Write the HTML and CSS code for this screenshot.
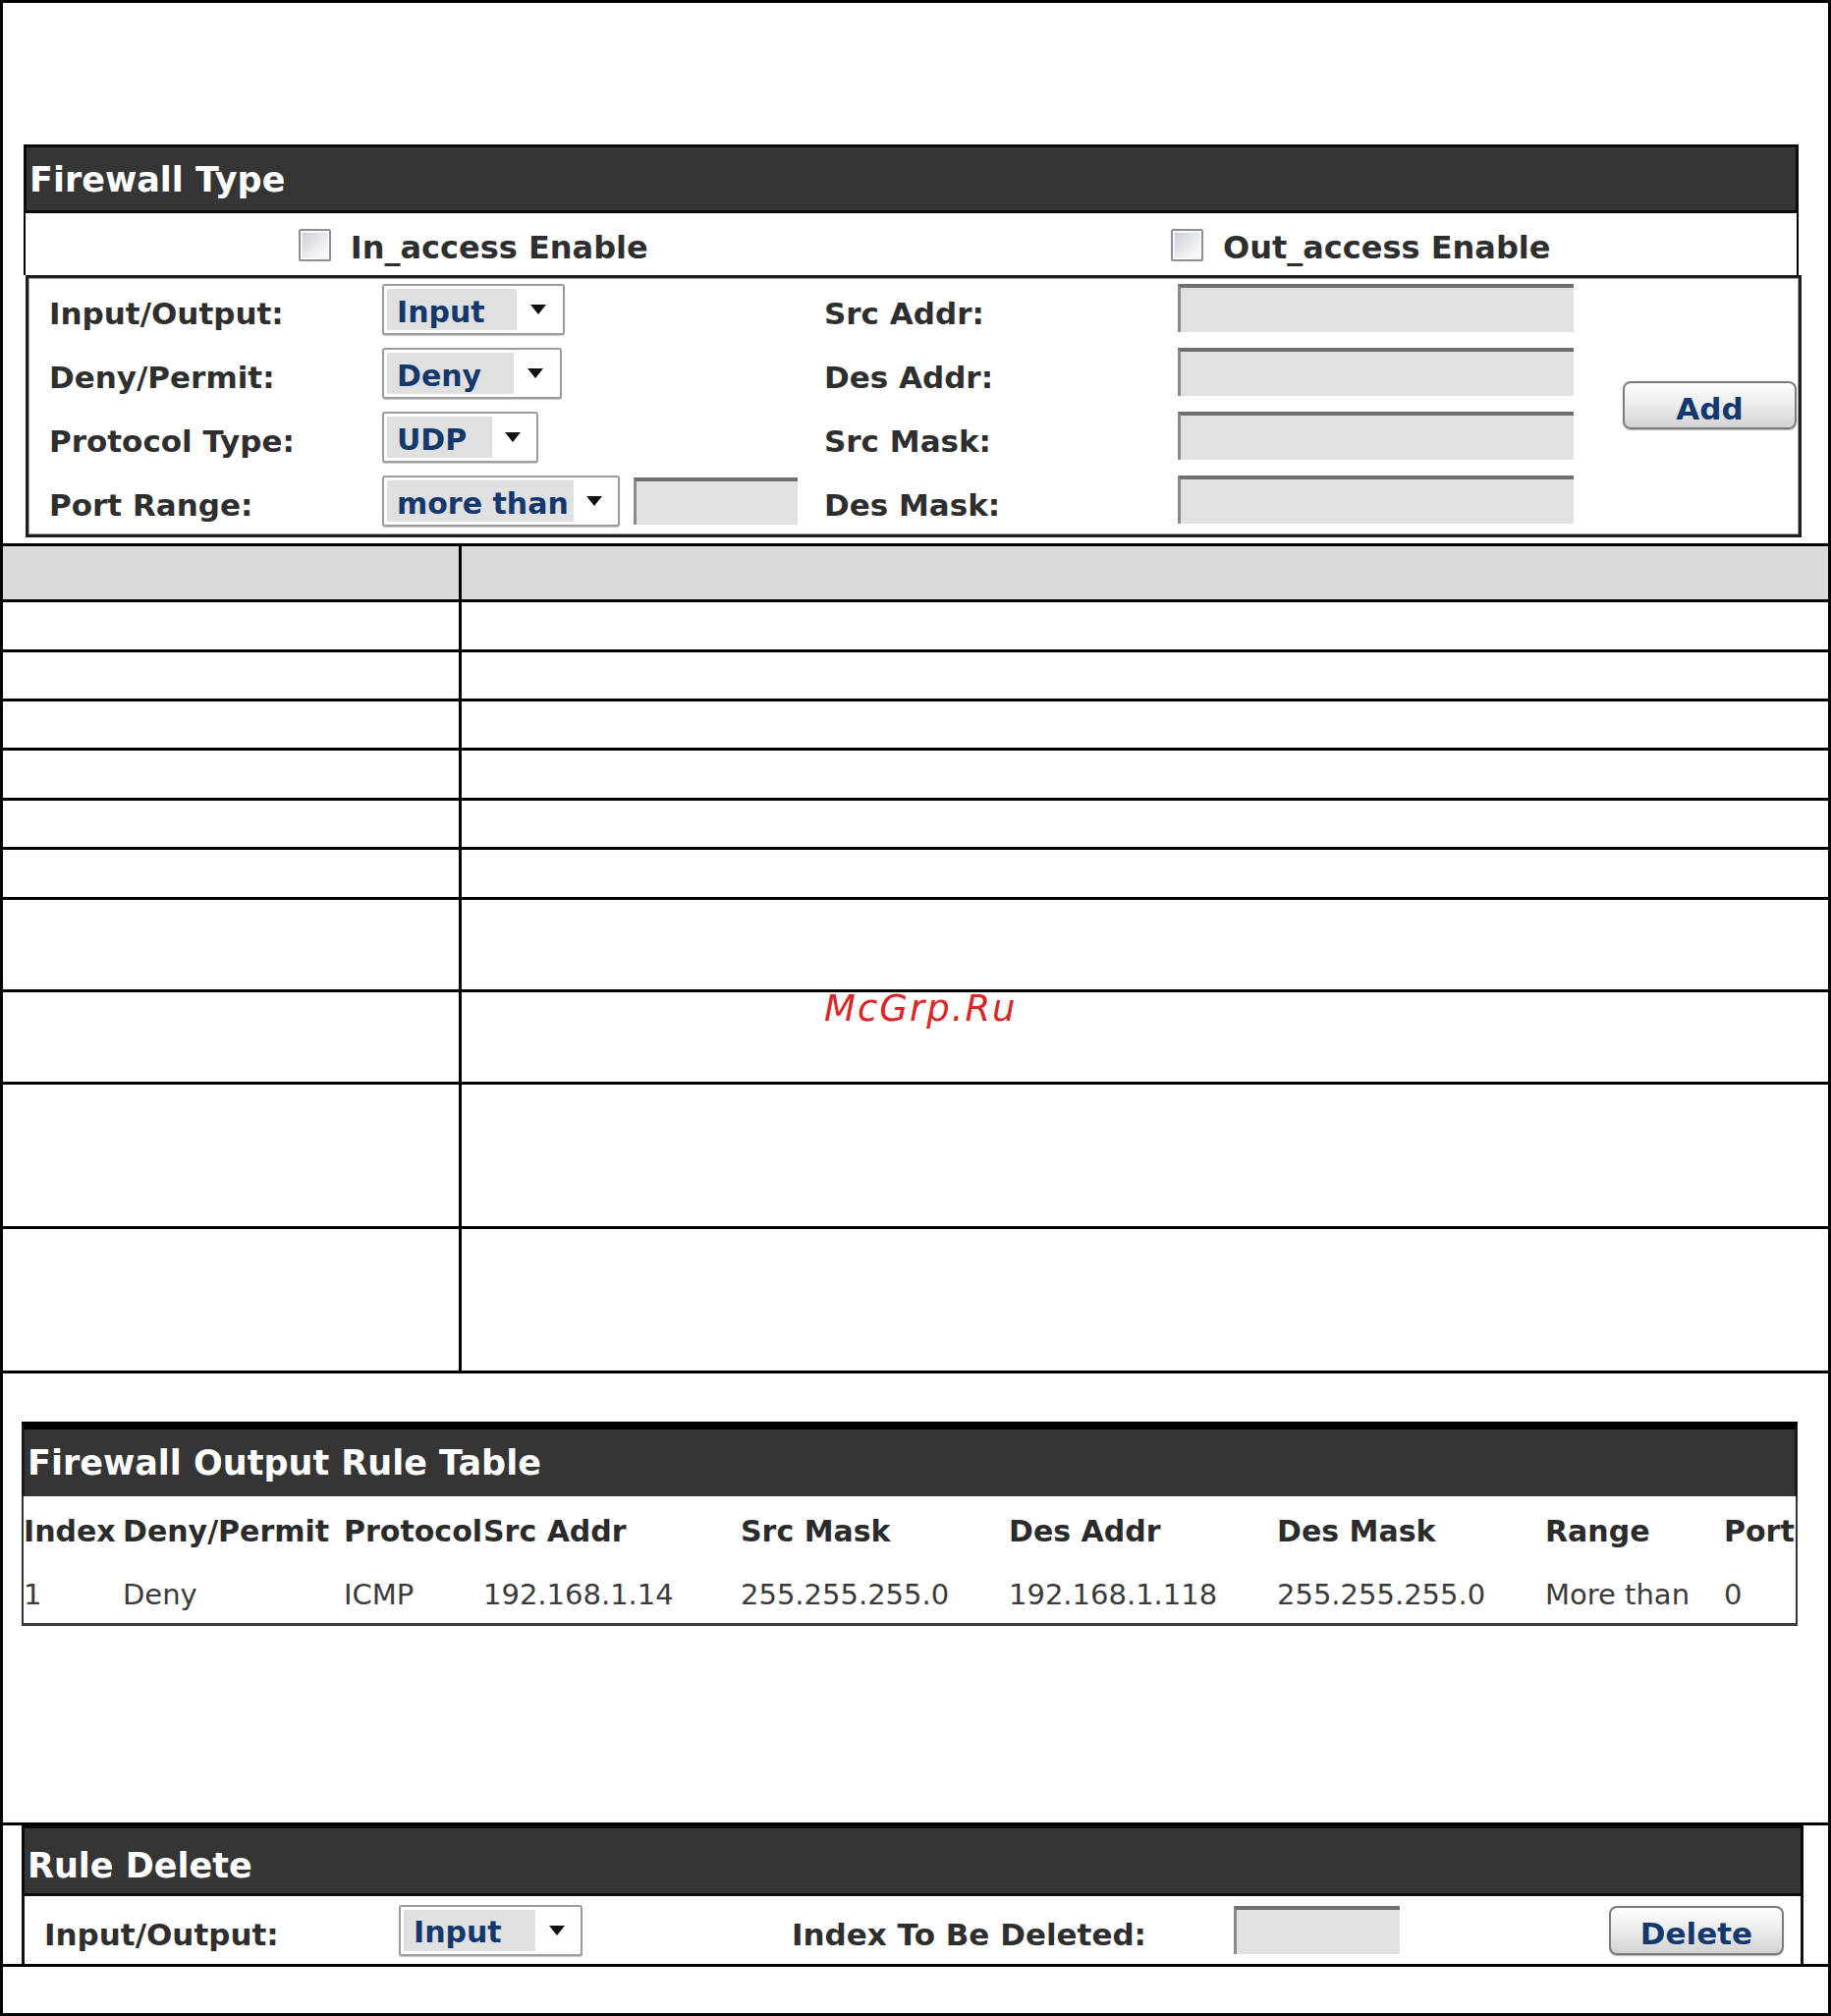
FILE: index.html
```html
<!DOCTYPE html>
<html lang="en">
<head>
<meta charset="utf-8">
<title>Firewall</title>
<link rel="stylesheet" href="styles.css">
</head>
<body>
<div class="page">

  <section class="fw-type">
    <div class="panel-head">Firewall Type</div>
    <div class="access-row">
      <label class="access-cell"><span class="chk"></span><span class="access-text">In_access Enable</span></label>
      <label class="access-cell"><span class="chk"></span><span class="access-text">Out_access Enable</span></label>
    </div>
  </section>

  <div class="rule-form">
    <div class="lbl">Input/Output:</div>
    <div class="select sel-io"><span class="val">Input</span><span class="arr"><svg viewBox="0 0 16 10" width="16" height="10"><path d="M0 0H16L8 10Z"/></svg></span></div>
    <div class="lbl">Src Addr:</div>
    <div class="text-in"></div>
    <button class="btn btn-add">Add</button>

    <div class="lbl">Deny/Permit:</div>
    <div class="select sel-dp"><span class="val">Deny</span><span class="arr"><svg viewBox="0 0 16 10" width="16" height="10"><path d="M0 0H16L8 10Z"/></svg></span></div>
    <div class="lbl">Des Addr:</div>
    <div class="text-in"></div>

    <div class="lbl">Protocol Type:</div>
    <div class="select sel-proto"><span class="val">UDP</span><span class="arr"><svg viewBox="0 0 16 10" width="16" height="10"><path d="M0 0H16L8 10Z"/></svg></span></div>
    <div class="lbl">Src Mask:</div>
    <div class="text-in"></div>

    <div class="lbl">Port Range:</div>
    <div class="range-cell">
      <div class="select sel-range"><span class="val">more than</span><span class="arr"><svg viewBox="0 0 16 10" width="16" height="10"><path d="M0 0H16L8 10Z"/></svg></span></div>
      <div class="text-in small"></div>
    </div>
    <div class="lbl">Des Mask:</div>
    <div class="text-in"></div>
  </div>

  <div class="desc">
    <div class="desc-row row-head"><div class="k"></div><div class="v"></div></div>
    <div class="desc-row row-a"><div class="k"></div><div class="v"></div></div>
    <div class="desc-row row-b"><div class="k"></div><div class="v"></div></div>
    <div class="desc-row row-b"><div class="k"></div><div class="v"></div></div>
    <div class="desc-row row-a"><div class="k"></div><div class="v"></div></div>
    <div class="desc-row row-b"><div class="k"></div><div class="v"></div></div>
    <div class="desc-row row-a"><div class="k"></div><div class="v"></div></div>
    <div class="desc-row row-tall"><div class="k"></div><div class="v"></div></div>
    <div class="desc-row row-tall"><div class="k"></div><div class="v"></div></div>
    <div class="desc-row row-xtall"><div class="k"></div><div class="v"></div></div>
    <div class="desc-row row-xtall"><div class="k"></div><div class="v"></div></div>
  </div>

  <section class="out">
    <div class="panel-head">Firewall Output Rule Table</div>
    <div class="out-body">
      <div class="out-grid">
        <div class="th">Index</div>
        <div class="th">Deny/Permit</div>
        <div class="th">Protocol</div>
        <div class="th">Src Addr</div>
        <div class="th">Src Mask</div>
        <div class="th">Des Addr</div>
        <div class="th">Des Mask</div>
        <div class="th">Range</div>
        <div class="th">Port</div>

        <div class="td">1</div>
        <div class="td">Deny</div>
        <div class="td">ICMP</div>
        <div class="td">192.168.1.14</div>
        <div class="td">255.255.255.0</div>
        <div class="td">192.168.1.118</div>
        <div class="td">255.255.255.0</div>
        <div class="td">More than</div>
        <div class="td">0</div>
      </div>
    </div>
  </section>

  <section class="del-wrap">
    <div class="del-box">
      <div class="panel-head">Rule Delete</div>
      <div class="del-row">
        <div class="lbl">Input/Output:</div>
        <div class="select sel-del"><span class="val">Input</span><span class="arr"><svg viewBox="0 0 16 10" width="16" height="10"><path d="M0 0H16L8 10Z"/></svg></span></div>
        <div class="lbl">Index To Be Deleted:</div>
        <div class="text-in idx"></div>
        <button class="btn btn-del">Delete</button>
      </div>
    </div>
  </section>

  <div class="wm">McGrp.Ru</div>
</div>
</body>
</html>
```

FILE: styles.css
```css
* { box-sizing: border-box; }

html, body {
  margin: 0;
  padding: 0;
  background: #fff;
}

body {
  font-family: "DejaVu Sans", Verdana, sans-serif;
  color: #2e2e2e;
}

.page {
  position: relative;
  width: 1864px;
  height: 2052px;
  border: 3px solid #000;
  overflow: hidden;
}

/* ---------- panel header ---------- */
.panel-head {
  display: flex;
  align-items: center;
  background: #353535;
  color: #fff;
  font-weight: bold;
  font-size: 35px;
  white-space: nowrap;
  padding-left: 3px;
}

/* ---------- Firewall Type ---------- */
.fw-type {
  margin: 144px 0 0 21px;
  width: 1807px;
}

.fw-type .panel-head {
  height: 70px;
  border: 3px solid #0b0b0b;
  padding-top: 2px;
}

.access-row {
  display: flex;
  height: 63px;
  border-left: 2px solid #000;
  border-right: 2px solid #000;
}

.access-cell {
  flex: 1;
  display: flex;
  align-items: center;
  justify-content: center;
  gap: 20px;
  font-weight: bold;
  font-size: 32px;
  white-space: nowrap;
}

.access-cell:first-child { padding-left: 12px; }
.access-cell:last-child { padding-left: 16px; }

.access-text { padding-top: 7px; }

.chk {
  display: block;
  width: 33px;
  height: 33px;
  margin-top: 2px;
  border: 2px solid #8f8f8f;
  border-radius: 2px;
  background: linear-gradient(135deg, #c4c9d3 0%, #e9ebef 55%, #ffffff 100%);
  box-shadow: inset 0 0 0 2px #f7f7f7;
}

/* ---------- rule form ---------- */
.rule-form {
  margin-left: 23px;
  width: 1808px;
  height: 267px;
  border: 3px solid #1e1e1e;
  box-shadow: inset 0 0 0 1px #a0a0a0;
  display: grid;
  grid-template-columns: 339px 450px 360px 403px 1fr;
  grid-auto-rows: 52px;
  row-gap: 13px;
  padding: 6px 2px 0 21px;
  align-items: center;
}

.lbl {
  font-weight: bold;
  font-size: 31px;
  white-space: nowrap;
  padding-top: 8px;
}

.select {
  display: flex;
  height: 52px;
  border: 2px solid #9c9c9c;
  border-radius: 3px;
  background: #fff;
  padding: 3px;
  box-shadow: 0 1px 1px #c8c8c8;
}

.select .val {
  display: flex;
  align-items: center;
  background: #e0e0e0;
  color: #12386e;
  font-weight: bold;
  font-size: 30px;
  padding: 4px 0 0 10px;
  white-space: nowrap;
}

.select .arr {
  flex: 1;
  display: flex;
  align-items: center;
  justify-content: center;
}

.select .arr path { fill: #111; }

.sel-io { width: 186px; }
.sel-io .val { width: 132px; }
.sel-dp { width: 183px; }
.sel-dp .val { width: 129px; }
.sel-proto { width: 159px; }
.sel-proto .val { width: 107px; }
.sel-range { width: 242px; }
.sel-range .val { width: 190px; }
.sel-del { width: 187px; }
.sel-del .val { width: 134px; }

.range-cell {
  display: flex;
  align-items: center;
  gap: 14px;
}

.text-in {
  width: 403px;
  height: 49px;
  align-self: start;
  background: #e1e1e1;
  border-top: 4px solid #6f6f6f;
  border-left: 3px solid #8a8a8a;
}

.text-in.small {
  width: 167px;
  height: 48px;
  align-self: center;
}

.btn {
  border: 2px solid #7b7b7b;
  border-radius: 8px;
  background: linear-gradient(#fdfdfd 0%, #eeeeee 45%, #d2d2d2 100%);
  font-family: "DejaVu Sans", Verdana, sans-serif;
  font-weight: bold;
  font-size: 31px;
  color: #12386e;
  padding: 6px 0 0 0;
  box-shadow: 0 1px 1px #b5b5b5;
}

.btn-add {
  grid-column: 5;
  grid-row: 1 / span 4;
  justify-self: end;
  align-self: center;
  width: 177px;
  height: 49px;
}

/* ---------- description table ---------- */
.desc {
  margin-top: 6px;
  border-top: 3px solid #000;
}

.desc-row {
  display: flex;
  border-bottom: 3px solid #000;
}

.desc-row .k {
  width: 467px;
  border-right: 3px solid #000;
}

.desc-row .v { flex: 1; }

.row-head { height: 57px; background: #d9d9d9; }
.row-a { height: 51px; }
.row-b { height: 50px; }
.row-tall { height: 94px; }
.row-xtall { height: 147px; }

/* ---------- output rule table ---------- */
.out {
  margin: 49px 0 0 19px;
  width: 1808px;
}

.out .panel-head {
  height: 76px;
  border-top: 8px solid #000;
  border-left: 3px solid #1a1a1a;
  border-right: 3px solid #1a1a1a;
}

.out-body {
  border-left: 2px solid #333;
  border-right: 2px solid #333;
  border-bottom: 3px solid #3a3a3a;
  overflow: hidden;
}

.out-grid {
  display: grid;
  grid-template-columns: 101px 225px 142px 262px 273px 273px 273px 182px 100px;
  grid-template-rows: 70px 59px;
  width: 1831px;
}

.th, .td {
  display: flex;
  align-items: center;
  white-space: nowrap;
}

.th {
  font-weight: bold;
  font-size: 30px;
  color: #2b2b2b;
}

.td {
  font-size: 29px;
  color: #3a3a3a;
}

/* ---------- rule delete ---------- */
.del-wrap {
  margin-top: 200px;
  border-top: 3px solid #000;
  border-bottom: 3px solid #000;
}

.del-box {
  margin-left: 19px;
  width: 1814px;
}

.del-box .panel-head {
  height: 72px;
  border: 3px solid #0b0b0b;
  padding-top: 10px;
}

.del-row {
  height: 69px;
  border-left: 3px solid #111;
  border-right: 3px solid #111;
  display: grid;
  grid-template-columns: 361px 400px 450px 382px 178px;
  align-items: center;
  padding-left: 20px;
}

.text-in.idx {
  width: 169px;
  height: 49px;
  align-self: center;
}

.btn-del {
  width: 178px;
  height: 50px;
}

/* ---------- watermark ---------- */
.wm {
  position: absolute;
  left: 836px;
  top: 1005px;
  color: #d9262a;
  font-family: "DejaVu Sans", Verdana, sans-serif;
  font-style: italic;
  font-size: 37px;
  line-height: 37px;
  letter-spacing: 2px;
}
```
